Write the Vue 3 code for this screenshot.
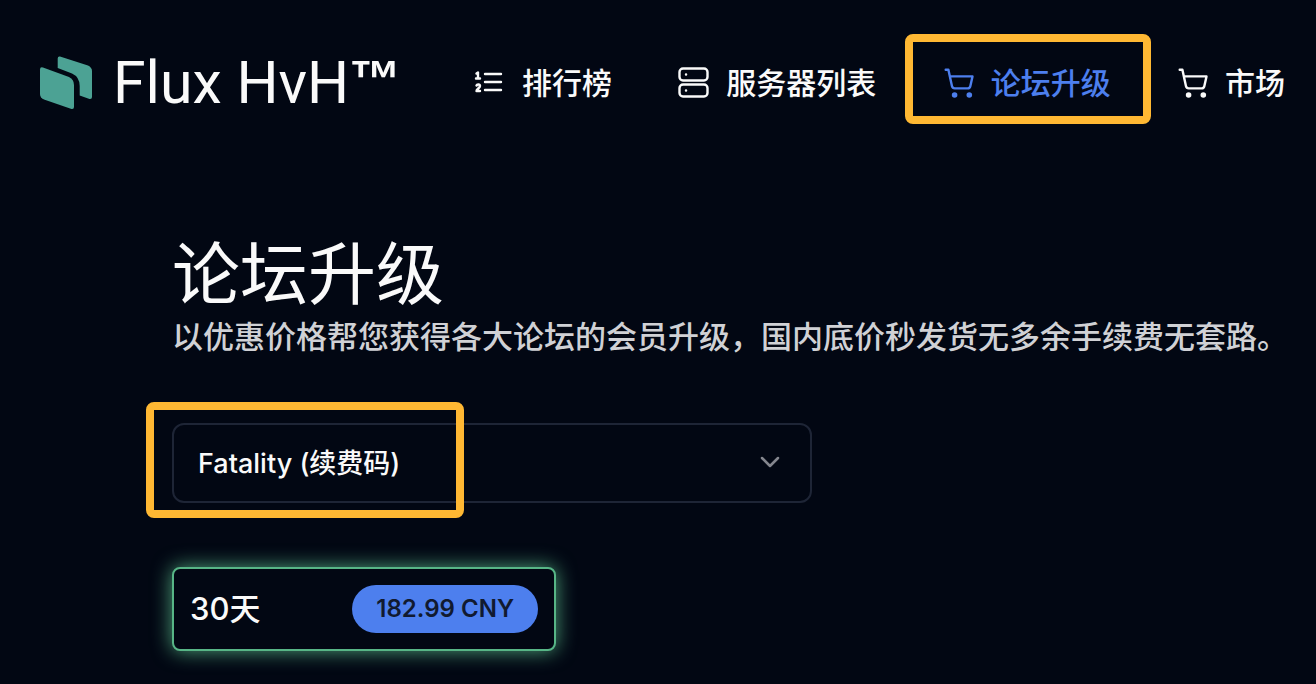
<script setup>
import { ref } from 'vue'

const nav = [
  { label: '排行榜', icon: 'list' },
  { label: '服务器列表', icon: 'server' },
  { label: '论坛升级', icon: 'cart', active: true },
  { label: '市场', icon: 'cart' },
]
const product = ref('fatality')
const plans = [{ name: '30天', price: '182.99 CNY' }]
</script>

<template>
  <div class="page">
    <header class="header">
      <a class="brand" href="#">
        <svg class="logo" viewBox="0 0 54 56" aria-hidden="true">
          <path d="M1 14.500Q1 11.500 4 12.500L30 22Q35 24.500 35 30V52Q35 54.500 32.500 54L5 44.500Q1 42.500 1 39Z" />
          <path d="M18.700 3.500Q18.700 1 21 1.500L49 10.500Q53 12.500 53 16V42Q53 44.500 50.500 44L40.700 40.500V31Q40.700 22 33 18.500L18.700 13Z" />
        </svg>
        <span class="name">Flux HvH<span class="mark">™</span></span>
      </a>
      <nav class="nav">
        <a v-for="item in nav" :key="item.label" class="link" :class="{ active: item.active }" href="#">
          <svg class="icon" viewBox="0 0 32 32" aria-hidden="true">
            <g v-if="item.icon === 'list'">
              <path d="M11 7H27M11 15H27M11 23H27" />
              <path class="digits" d="M2.500 6.500L4 5.500V11M2 11.500H6M2.500 18.500C3 17 6 17 6 19C6 21 2.500 22 2.500 24H6" />
            </g>
            <g v-else-if="item.icon === 'server'">
              <rect x="1.500" y="1.500" width="28" height="12" rx="3.500" />
              <rect x="1.500" y="17.500" width="28" height="12" rx="3.500" />
              <path d="M8 7.500H8.100M8 23.500H8.100" />
            </g>
            <g v-else>
              <path d="M2.700 2.700H5.400L9 19.300Q9.500 21.400 11.700 21.400H24.700Q26.900 21.400 27.300 19.300L29.500 9.400H6.800" />
              <circle cx="11.600" cy="28" r="2.800" />
              <circle cx="26.300" cy="28" r="2.800" />
            </g>
          </svg>
          <span>{{ item.label }}</span>
        </a>
      </nav>
    </header>

    <main class="main">
      <h1 class="title">论坛升级</h1>
      <p class="intro">以优惠价格帮您获得各大论坛的会员升级，国内底价秒发货无多余手续费无套路。</p>

      <div class="picker">
        <select v-model="product" class="select" aria-label="论坛升级">
          <option value="fatality">Fatality (续费码)</option>
        </select>
        <svg class="chevron" viewBox="0 0 24 24" aria-hidden="true"><path d="M4 8L12 16L20 8" /></svg>
      </div>

      <button v-for="plan in plans" :key="plan.name" class="plan" type="button">
        <span>{{ plan.name }}</span>
        <span class="price">{{ plan.price }}</span>
      </button>
    </main>
  </div>
</template>

<style>
body {
  margin: 0;
  background: #020713;
}
</style>

<style scoped>
.page {
  min-height: 100vh;
  box-sizing: border-box;
  overflow: hidden;
  background: #020713;
  color: #fafafa;
  font-family: Inter, "Noto Sans CJK SC", sans-serif;
}
.header {
  display: flex;
  align-items: center;
  height: 166px;
  padding: 0 31px 0 39px;
  white-space: nowrap;
}
.brand {
  display: flex;
  align-items: center;
  gap: 20px;
  width: 435px;
  flex: none;
  color: inherit;
  text-decoration: none;
}
.logo {
  width: 54px;
  height: 56px;
  fill: #4ca294;
}
.name {
  font-family: Roboto, sans-serif;
  font-size: 59px;
  line-height: 64px;
}
.mark {
  font-family: "Liberation Sans", sans-serif;
  font-size: 52px;
  font-weight: 700;
  line-height: 1;
  vertical-align: 6px;
}
.nav {
  display: flex;
  flex: 1;
  justify-content: space-between;
}
.link {
  position: relative;
  display: flex;
  align-items: center;
  gap: 16px;
  color: inherit;
  font-size: 30px;
  font-weight: 500;
  line-height: 40px;
  text-decoration: none;
}
.active {
  color: #4d7fee;
}
.active::after {
  content: "";
  position: absolute;
  inset: -29px -40px -21px -38px;
  border: 8px solid #ffb833;
  border-radius: 8px;
}
.icon {
  width: 32px;
  height: 32px;
  fill: none;
  stroke: currentColor;
  stroke-width: 2.400;
  stroke-linecap: round;
  stroke-linejoin: round;
}
.icon circle {
  fill: currentColor;
  stroke: none;
}
.main {
  padding: 68px 24px 32px 172px;
}
.title {
  margin: 0;
  font-size: 68px;
  font-weight: 400;
  line-height: 80px;
}
.intro {
  margin: 3px 0 0;
  color: #d0d1d5;
  font-size: 31px;
  font-weight: 500;
  line-height: 40px;
  white-space: nowrap;
}
.picker {
  position: relative;
  max-width: 640px;
  margin-top: 66px;
}
.picker::after {
  content: "";
  position: absolute;
  inset: -21px 348px -15px -26px;
  border: 8px solid #ffb833;
  border-radius: 8px;
  pointer-events: none;
}
.select {
  display: block;
  width: 100%;
  height: 80px;
  padding: 0 64px 0 24px;
  border: 2px solid #1e2536;
  border-radius: 12px;
  appearance: none;
  background: transparent;
  color: #fafafa;
  font: 500 27px Inter, "Noto Sans CJK SC", sans-serif;
}
.chevron {
  position: absolute;
  top: 27px;
  right: 30px;
  width: 24px;
  height: 24px;
  fill: none;
  stroke: #84868e;
  stroke-width: 2.500;
  stroke-linecap: round;
  stroke-linejoin: round;
  pointer-events: none;
}
.plan {
  display: flex;
  align-items: center;
  justify-content: space-between;
  width: 384px;
  height: 84px;
  margin-top: 64px;
  padding: 0 16px;
  border: 2px solid #57b586;
  border-radius: 8px;
  background: #020713;
  box-shadow: 0 0 20px rgba(87, 181, 134, 0.900);
  color: #fafafa;
  font: 500 31px/48px Inter, "Noto Sans CJK SC", sans-serif;
}
.price {
  padding: 0 24px;
  border-radius: 24px;
  background: #4d7fee;
  color: #111a30;
  font-size: 24px;
  font-weight: 600;
  line-height: 48px;
}
</style>
